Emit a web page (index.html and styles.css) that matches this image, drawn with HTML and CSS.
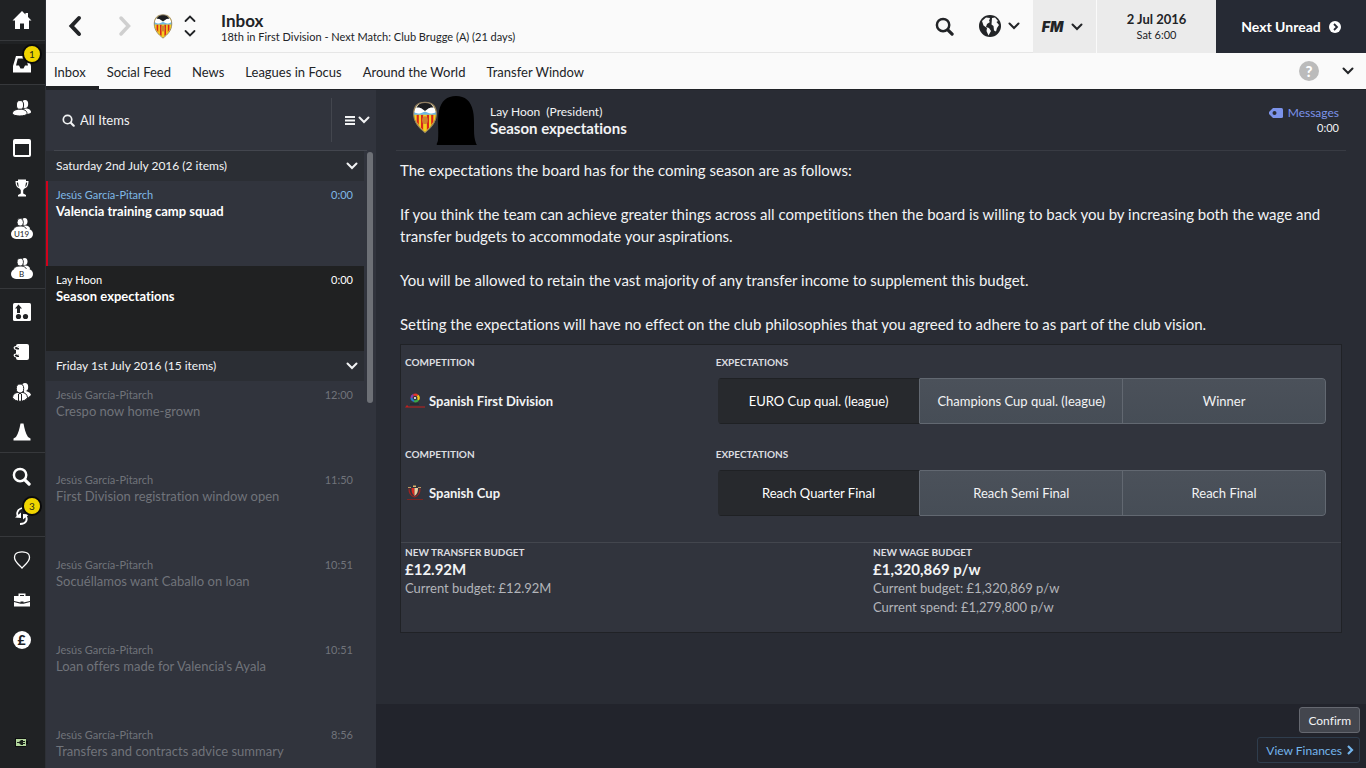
FILE: index.html
```html
<!DOCTYPE html>
<html lang="en">
<head>
    <meta charset="UTF-8">
    <meta name="viewport" content="width=device-width, initial-scale=1.0">
    <title>Inbox - Season expectations</title>
    <link rel="stylesheet" href="styles.css">
</head>
<body>
    <!-- shared icon shapes -->
    <svg class="sprite" aria-hidden="true">
        <symbol id="chevron-down" viewBox="0 0 12 8">
            <path d="M1.500 1.500 6 6l4.500-4.500" fill="none" stroke="currentColor" stroke-width="2" stroke-linecap="round"/>
        </symbol>
        <symbol id="search" viewBox="0 0 20 20">
            <circle cx="8.500" cy="8.500" r="6.500" fill="none" stroke="currentColor" stroke-width="2.600"/>
            <path d="M13.500 13.500 18 18" stroke="currentColor" stroke-width="3.400" stroke-linecap="round"/>
        </symbol>
        <symbol id="people" viewBox="0 0 20 18">
            <ellipse cx="13" cy="5" rx="3.200" ry="4"/>
            <path d="M11 10c4-1.500 8 .5 8 3 0 1.500-3 2-6 2z"/>
            <g stroke="#202224" stroke-width="1">
                <ellipse cx="8" cy="6" rx="3.600" ry="4.500"/>
                <path d="M.5 14.500c0-3 3.500-4.300 7.500-4.300s7 1.300 7 4.300c0 3.300-14.500 3.300-14.500 0z"/>
            </g>
        </symbol>
        <symbol id="crest" viewBox="0 0 24 30">
            <path d="M12 1C5 1 1.500 5 1.500 12c0 8 5.500 13 10.500 17 5-4 10.500-9 10.500-17C22.500 5 19 1 12 1z" fill="#f6cf1e"/>
            <path d="M4.300 12.500h2v9.500l-2-3zM8.300 12.500h2v14l-2-2zM13.700 12.500h2v12l-2 2zM17.700 12.500h2v6.500l-2 3z" fill="#d8261c"/>
            <path d="M1.700 9.500h20.600c.2 1.200.2 2 0 3H1.700c-.2-1-.2-1.800 0-3z" fill="#6fb9e6"/>
            <path d="M2 10C3 4 7 1 12 1s9 3 10 9c-2 1.500-4 1.500-6 1l-4-1.500L8 11c-2 .5-4 .5-6-1z" fill="#fff"/>
            <path d="M4 6C6 2.500 8.500 1 12 1s6 1.500 8 5c-2-.5-4 0-5.500 1.200L12 9 9.500 7.200C8 6 6 5.500 4 6z" fill="#1b1c1f"/>
            <ellipse cx="12" cy="17.500" rx="2.600" ry="3.600" fill="#d1842c"/>
            <path d="M12 1C5 1 1.500 5 1.500 12c0 8 5.500 13 10.500 17 5-4 10.500-9 10.500-17C22.500 5 19 1 12 1z" fill="none" stroke="#8f7d62" stroke-width="1"/>
        </symbol>
    </svg>

    <div class="app">
        <nav class="sidebar" aria-label="Main">
            <div class="nav-group">
                <a href="#" class="nav-item" aria-label="Home">
                    <svg width="20" height="20" viewBox="0 0 20 20"><path d="M10 1 .5 10.500H3V19h5v-5.500h4V19h5v-8.500h2.500L16 7V3h-2.500v1.500z"/></svg>
                </a>
            </div>
            <div class="nav-group current">
                <a href="#" class="nav-item" aria-label="Inbox">
                    <svg width="20" height="20" viewBox="0 0 20 20"><path d="M4 2h12l3 10v6.500H1V12zm1.800 2.500L4 11.500h3l1.500 3h3l1.500-3h3l-1.800-7z" fill-rule="evenodd"/></svg>
                    <span class="badge">1</span>
                </a>
            </div>
            <div class="nav-group">
                <a href="#" class="nav-item" aria-label="Squad">
                    <svg width="20" height="18"><use href="#people"/></svg>
                </a>
                <a href="#" class="nav-item" aria-label="Schedule">
                    <svg width="18" height="18" viewBox="0 0 18 18"><path d="M2 0h14a2 2 0 0 1 2 2v14a2 2 0 0 1-2 2H2a2 2 0 0 1-2-2V2a2 2 0 0 1 2-2zm0 5v11h14V5z" fill-rule="evenodd"/></svg>
                </a>
                <a href="#" class="nav-item" aria-label="Competitions">
                    <svg width="14" height="18" viewBox="0 0 14 18"><path d="M3 .5h8V2h2.500c0 4-1 6.500-4 7.500-.6.800-1.300 1-1.300 2v3l2.800 1.500v1.500H3V16l2.800-1.500v-3c0-1-.7-1.200-1.300-2C1.500 8.500.5 6 .5 2H3zM3 3.500H1.800C2 5.500 2.500 7 3.800 8zM11 3.500 10.200 8c1.300-1 1.800-2.500 2-4.500z" fill-rule="evenodd"/></svg>
                </a>
                <a href="#" class="nav-item team" aria-label="Under 19s">
                    <svg width="18" height="16"><use href="#people"/></svg>
                    <span class="team-tag">U19</span>
                </a>
                <a href="#" class="nav-item team" aria-label="B team">
                    <svg width="18" height="16"><use href="#people"/></svg>
                    <span class="team-tag">B</span>
                </a>
            </div>
            <div class="nav-group">
                <a href="#" class="nav-item" aria-label="Tactics">
                    <svg width="18" height="18" viewBox="0 0 18 18"><rect width="18" height="18" rx="1.500"/><g fill="#202224"><path d="M5.500 1.500 9 5.500H7V10H4V5.500H2z"/><circle cx="5.500" cy="13.500" r="2.600"/><circle cx="12.500" cy="13.500" r="2.600"/></g></svg>
                </a>
                <a href="#" class="nav-item" aria-label="Team report">
                    <svg width="18" height="18" viewBox="0 0 18 18"><rect x="3" y="1" width="13" height="16" rx="2"/><g fill="none" stroke="#202224" stroke-width="3"><path d="M0 5h6M0 12.500h6"/></g><g fill="none" stroke="#fff" stroke-width="1.200"><path d="M3.500 6.500C.5 6.500.5 3.500 3 3.500q2.500 0 2.500 1.500M3.500 14C.5 14 .5 11 3 11q2.500 0 2.500 1.500"/></g></svg>
                </a>
                <a href="#" class="nav-item" aria-label="Staff">
                    <svg width="20" height="20" viewBox="0 0 20 20"><ellipse cx="13" cy="5" rx="3.200" ry="4"/><path d="M12 9c4 0 6.500 2 7 4l-3 2.500-4-2z"/><g stroke="#202224"><ellipse cx="8" cy="6.500" rx="3.700" ry="4.500"/><path d="M.5 15.500C1 12 3 10.800 6 10.300l2 1.700 2-1.700c3 .5 5 1.700 5.500 5.200-2 5-13 5-15 0z"/><path d="M6.500 12v7M9.500 12v7"/></g></svg>
                </a>
                <a href="#" class="nav-item" aria-label="Training">
                    <svg width="18" height="18" viewBox="0 0 18 18"><path d="M7.500.5h3c1 5 2 10 4.500 13.500l2.500 1.500V17.500H.5v-2L3 14C5.500 10.500 6.500 5.500 7.500.5z"/></svg>
                </a>
            </div>
            <div class="nav-group">
                <a href="#" class="nav-item" aria-label="Scouting">
                    <svg width="19" height="19"><use href="#search"/></svg>
                </a>
                <a href="#" class="nav-item" aria-label="Transfers">
                    <svg width="14" height="20" viewBox="0 0 14 20"><g fill="none" stroke="#fff" stroke-width="1.800"><path d="M7 2C2 3.500 1 8 3.500 11"/><path d="M5 18c6.500 0 8.500-5 5-9"/></g><path d="M0 11.500 6 12V6.500zM14 8.500 8 8v5.500z"/></svg>
                    <span class="badge">3</span>
                </a>
            </div>
            <div class="nav-group last">
                <a href="#" class="nav-item" aria-label="Club">
                    <svg width="18" height="18" viewBox="0 0 18 18"><path d="M5 1.500Q9 .2 13 1.500q3.500 1.200 3.500 5C16.500 11 11 14.500 9 17 7 14.500 1.500 11 1.500 6.500q0-3.800 3.500-5z" fill="none" stroke="#fff" stroke-width="1.300"/></svg>
                </a>
                <a href="#" class="nav-item" aria-label="Board">
                    <svg width="16" height="14" viewBox="0 0 16 14"><path d="M4.500 3V.5h7V3H16v5l-6.500 1.500v-1h-3v1L0 8V3zm1.500 0h4V2H6z" fill-rule="evenodd"/><path d="m0 9 6.500 1.700h3L16 9v4.500H0z"/></svg>
                </a>
                <a href="#" class="nav-item" aria-label="Finances">
                    <span class="coin">£</span>
                </a>
            </div>
            <svg class="battery" width="13" height="9" viewBox="0 0 13 9"><path d="M0 0h11v3h2v3h-2v3H0z" fill="#0d0f0e"/><path d="M1 1h10v7H1z" fill="#b3d69d"/><path d="M2 4h2l2-2h2v1h2v1H8v1h2v1H8v1H6L4 5H2z" fill="#1a211a"/></svg>
        </nav>

        <div class="page">
            <header class="topbar">
                <button class="nav-arrow" aria-label="Back">
                    <svg width="14" height="22" viewBox="0 0 14 22"><path d="M11 3 3.500 11l7.500 8" fill="none" stroke="currentColor" stroke-width="4" stroke-linecap="round"/></svg>
                </button>
                <button class="nav-arrow forward" aria-label="Forward">
                    <svg width="14" height="22" viewBox="0 0 14 22"><path d="m3 3 7.500 8L3 19" fill="none" stroke="currentColor" stroke-width="3.500" stroke-linecap="round"/></svg>
                </button>
                <svg class="club" width="20" height="25"><use href="#crest"/></svg>
                <button class="stepper" aria-label="Change section">
                    <svg width="12" height="22" viewBox="0 0 12 22"><path d="M1.500 6 6 1.500 10.500 6M1.500 16 6 20.500 10.500 16" fill="none" stroke="currentColor" stroke-width="1.800" stroke-linecap="round"/></svg>
                </button>
                <div class="heading">
                    <h1>Inbox</h1>
                    <p>18th in First Division - Next Match: Club Brugge (A) (21 days)</p>
                </div>
                <button class="icon-btn" aria-label="Search">
                    <svg width="19" height="19"><use href="#search"/></svg>
                </button>
                <button class="icon-btn world" aria-label="World">
                    <svg width="22" height="22" viewBox="0 0 22 22"><circle cx="11" cy="11" r="11" fill="#222427"/><path d="m3 6 4-3.500 4 .5-1 3 1 1-3 2-1 3 3 1 2 3-2.500 4.500L7.500 16l.5-3-3.500-2.500zM13 3l3-.5 3 3.500-1.500 1 2.500 3-2 3-1 3.500-2-1-.5-4.500-2-1.500z" fill="#fafafa"/></svg>
                    <svg width="12" height="8"><use href="#chevron-down"/></svg>
                </button>
                <button class="fm-btn" aria-label="FM menu">
                    <span class="fm">FM</span>
                    <svg width="12" height="8"><use href="#chevron-down"/></svg>
                </button>
                <div class="date">
                    <strong>2 Jul 2016</strong>
                    <span>Sat 6:00</span>
                </div>
                <button class="next-btn">
                    Next Unread
                    <svg width="12" height="12" viewBox="0 0 12 12"><circle cx="6" cy="6" r="6" fill="#fff"/><path d="m5 3 3 3-3 3" fill="none" stroke="#262a34" stroke-width="1.800"/></svg>
                </button>
            </header>

            <nav class="tabs" aria-label="Inbox sections">
                <a href="#" class="tab active">Inbox</a>
                <a href="#" class="tab">Social Feed</a>
                <a href="#" class="tab">News</a>
                <a href="#" class="tab">Leagues in Focus</a>
                <a href="#" class="tab">Around the World</a>
                <a href="#" class="tab">Transfer Window</a>
                <button class="help" aria-label="Help">?</button>
                <button class="more" aria-label="More"><svg width="12" height="8"><use href="#chevron-down"/></svg></button>
            </nav>

            <div class="content">
                <aside class="inbox">
                    <div class="filter">
                        <label class="filter-search">
                            <svg width="13" height="13"><use href="#search"/></svg>
                            <input type="text" value="All Items" aria-label="Filter items">
                        </label>
                        <button class="filter-menu" aria-label="Filter menu">
                            <svg width="10" height="9" viewBox="0 0 10 9"><path d="M0 0h10v2H0zM0 3.500h10v2H0zM0 7h10v2H0z" fill="currentColor"/></svg>
                            <svg width="12" height="8"><use href="#chevron-down"/></svg>
                        </button>
                    </div>
                    <div class="list-wrap">
                        <div class="list">
                            <button class="day">Saturday 2nd July 2016 (2 items) <svg width="12" height="8"><use href="#chevron-down"/></svg></button>
                            <a href="#" class="item unread">
                                <span class="from">Jesús García-Pitarch</span><time>0:00</time>
                                <span class="subject">Valencia training camp squad</span>
                            </a>
                            <a href="#" class="item selected">
                                <span class="from">Lay Hoon</span><time>0:00</time>
                                <span class="subject">Season expectations</span>
                            </a>
                            <button class="day">Friday 1st July 2016 (15 items) <svg width="12" height="8"><use href="#chevron-down"/></svg></button>
                            <a href="#" class="item">
                                <span class="from">Jesús García-Pitarch</span><time>12:00</time>
                                <span class="subject">Crespo now home-grown</span>
                            </a>
                            <a href="#" class="item">
                                <span class="from">Jesús García-Pitarch</span><time>11:50</time>
                                <span class="subject">First Division registration window open</span>
                            </a>
                            <a href="#" class="item">
                                <span class="from">Jesús García-Pitarch</span><time>10:51</time>
                                <span class="subject">Socuéllamos want Caballo on loan</span>
                            </a>
                            <a href="#" class="item">
                                <span class="from">Jesús García-Pitarch</span><time>10:51</time>
                                <span class="subject">Loan offers made for Valencia's Ayala</span>
                            </a>
                            <a href="#" class="item">
                                <span class="from">Jesús García-Pitarch</span><time>8:56</time>
                                <span class="subject">Transfers and contracts advice summary</span>
                            </a>
                        </div>
                        <div class="scrollbar"><div class="thumb"></div></div>
                    </div>
                </aside>

                <main class="message">
                    <div class="message-head">
                        <svg width="64" height="50" viewBox="0 0 64 50">
                            <use href="#crest" x="-1" y="6" width="26" height="33"/>
                            <path d="M24 50c-1-1 1-3 1-5 1-9-1-21 1-29C28 6 34 1 43 1s15 5 17 15c2 9 0 22 2 29 1 3 1 4 2 5z" fill="#000"/>
                        </svg>
                        <div class="sender">
                            <p>Lay Hoon&nbsp; (President)</p>
                            <h2>Season expectations</h2>
                        </div>
                        <div class="meta">
                            <a href="#"><svg width="14" height="10" viewBox="0 0 14 10"><path d="M4 0h8.500Q14 0 14 1.500v7q0 1.500-1.500 1.500H4L0 6V4z" fill="currentColor"/><circle cx="5.500" cy="5" r="2" fill="#292c34"/></svg>Messages</a>
                            <time>0:00</time>
                        </div>
                    </div>

                    <div class="message-body">
                        <p>The expectations the board has for the coming season are as follows:</p>
                        <p>If you think the team can achieve greater things across all competitions then the board is willing to back you by increasing both the wage and transfer budgets to accommodate your aspirations.</p>
                        <p>You will be allowed to retain the vast majority of any transfer income to supplement this budget.</p>
                        <p>Setting the expectations will have no effect on the club philosophies that you agreed to adhere to as part of the club vision.</p>

                        <section class="board">
                            <div class="competition">
                                <h3>Competition</h3>
                                <h3>Expectations</h3>
                                <div class="comp-name">
                                    <svg width="20" height="16" viewBox="0 0 20 16"><g fill="none" stroke-width="2.200"><path d="M6.500 5a3.500 3.500 0 0 1 2-3" stroke="#8c3fa8"/><path d="M8.500 2a3.500 3.500 0 0 1 4 .5" stroke="#e5352b"/><path d="M12.500 2.500A3.500 3.500 0 0 1 13 7" stroke="#f3c51c"/><path d="M13 7a3.500 3.500 0 0 1-4 1" stroke="#39a845"/><path d="M9 8a3.500 3.500 0 0 1-2.500-3" stroke="#2777c9"/></g><circle cx="10" cy="5" r="1" fill="#fff"/><path d="M5 10.500h9v1H5z" fill="#202226"/><path d="M0 14.500 2 12l1.500 1.500H20v1z" fill="#c3201f"/></svg>
                                    Spanish First Division
                                </div>
                                <div class="choices" role="group" aria-label="Spanish First Division expectations">
                                    <button class="choice chosen" aria-pressed="true">EURO Cup qual. (league)</button>
                                    <button class="choice" aria-pressed="false">Champions Cup qual. (league)</button>
                                    <button class="choice" aria-pressed="false">Winner</button>
                                </div>
                            </div>
                            <div class="competition">
                                <h3>Competition</h3>
                                <h3>Expectations</h3>
                                <div class="comp-name">
                                    <svg width="20" height="16" viewBox="0 0 20 16"><path d="M4 3.500C4 8 6 11 9.500 12 13 11 15 8 15 3.500" fill="none" stroke="#a32420" stroke-width="1.200"/><path d="M3 2.500h3M13 2.500h3" stroke="#b99a62"/><path d="M6.500 3h3v8C7 9 6.500 7 6.500 3z" fill="#d9291f"/><path d="M9.500 3h3.500c0 4-.8 6-3.500 8z" fill="#e8d2a4"/><path d="M8 .5h3v1.500H8z" fill="#d9b36b"/><path d="M2 14.500h16" stroke="#7d2422"/></svg>
                                    Spanish Cup
                                </div>
                                <div class="choices" role="group" aria-label="Spanish Cup expectations">
                                    <button class="choice chosen" aria-pressed="true">Reach Quarter Final</button>
                                    <button class="choice" aria-pressed="false">Reach Semi Final</button>
                                    <button class="choice" aria-pressed="false">Reach Final</button>
                                </div>
                            </div>
                            <div class="budgets">
                                <div>
                                    <h3>New transfer budget</h3>
                                    <strong>£12.92M</strong>
                                    <p>Current budget: £12.92M</p>
                                </div>
                                <div>
                                    <h3>New wage budget</h3>
                                    <strong>£1,320,869 p/w</strong>
                                    <p>Current budget: £1,320,869 p/w</p>
                                    <p>Current spend: £1,279,800 p/w</p>
                                </div>
                            </div>
                        </section>
                    </div>

                    <footer class="actions">
                        <button class="confirm">Confirm</button>
                        <a href="#" class="finances">View Finances <svg width="8" height="10" viewBox="0 0 8 10"><path d="m2 1 4 4-4 4" fill="none" stroke="currentColor" stroke-width="2.200"/></svg></a>
                    </footer>
                </main>
            </div>
        </div>
    </div>
</body>
</html>
```
FILE: styles.css
```css
* {
    box-sizing: border-box;
}

body {
    margin: 0;
    font-family: Lato, "Liberation Sans", sans-serif;
    font-size: 13px;
    font-variant-ligatures: none;
    color: #f2f3f4;
    background: #292c34;
}

h1, h2, h3, p {
    margin: 0;
}

a {
    color: inherit;
    text-decoration: none;
}

button {
    font: inherit;
    color: inherit;
    background: none;
    border: 0;
    padding: 0;
    margin: 0;
    cursor: pointer;
}

svg {
    display: block;
    flex-shrink: 0;
}

.sprite {
    position: absolute;
    width: 0;
    height: 0;
}

.app {
    display: flex;
    height: 100vh;
    overflow: hidden;
}

/* left icon rail */
.sidebar {
    width: 46px;
    flex-shrink: 0;
    display: flex;
    flex-direction: column;
    background: #202224;
    border-right: 1px solid #2d3036;
}

.nav-group {
    border-bottom: 1px solid #36383b;
    margin-bottom: 3px;
}

.nav-group.current {
    background: #1a1b1c;
}

.nav-group.last {
    border-bottom: 0;
}

.nav-item {
    position: relative;
    display: flex;
    flex-direction: column;
    align-items: center;
    justify-content: center;
    height: 40px;
    padding-right: 2px;
    color: #fff;
    fill: #fff;
}

.badge {
    position: absolute;
    top: 0;
    right: 3px;
    width: 20px;
    height: 20px;
    border: 2px solid #0b0b0c;
    border-radius: 50%;
    background: #f0d500;
    color: #26271f;
    font-size: 10px;
    line-height: 16px;
    text-align: center;
}

.team svg {
    margin-bottom: -4px;
}

.team-tag {
    position: relative;
    width: 22px;
    height: 10px;
    border-radius: 5px;
    background: #fff;
    color: #202224;
    font-size: 8px;
    line-height: 10px;
    text-align: center;
}

.coin {
    width: 18px;
    height: 18px;
    border-radius: 50%;
    background: #fff;
    color: #202224;
    font-size: 14px;
    font-weight: 900;
    line-height: 18px;
    text-align: center;
}

.battery {
    margin: auto 0 21px 15px;
}

.page {
    flex: 1;
    min-width: 0;
    display: flex;
    flex-direction: column;
}

/* top bar */
.topbar {
    display: flex;
    align-items: center;
    height: 53px;
    flex-shrink: 0;
    background: #fafafa;
    border-bottom: 1px solid #e6e6e6;
    color: #222427;
}

.nav-arrow {
    margin-left: 22px;
}

.nav-arrow.forward {
    margin-left: 36px;
    color: #cfcfcf;
}

.club {
    margin-left: 21px;
}

.stepper {
    margin-left: 11px;
}

.heading {
    flex: 1;
    min-width: 0;
    margin-left: 25px;
    padding-top: 4px;
}

.heading h1 {
    font-size: 17px;
    line-height: 18px;
    font-weight: 700;
}

.heading p {
    font-size: 11px;
    line-height: 14px;
}

.icon-btn {
    display: flex;
    align-items: center;
    gap: 7px;
    margin-right: 25px;
}

.icon-btn.world {
    margin-right: 13px;
}

.fm-btn {
    display: flex;
    align-items: center;
    justify-content: center;
    gap: 8px;
    align-self: stretch;
    width: 64px;
    margin-bottom: -1px;
    padding-right: 4px;
    background: #ebebeb;
    border-right: 1px solid #fafafa;
}

.fm {
    font-family: Inter, "Liberation Sans", sans-serif;
    font-size: 14px;
    font-weight: 900;
    font-style: italic;
}

.date {
    display: flex;
    flex-direction: column;
    align-items: center;
    justify-content: center;
    align-self: stretch;
    width: 119px;
    margin-bottom: -1px;
    background: #ebebeb;
}

.date strong {
    font-size: 13px;
    line-height: 17px;
}

.date span {
    font-size: 11px;
    line-height: 14px;
}

.next-btn {
    display: flex;
    align-items: center;
    justify-content: center;
    gap: 8px;
    align-self: stretch;
    width: 150px;
    margin-bottom: -1px;
    background: #262a34;
    color: #fff;
    font-size: 14px;
    font-weight: 700;
}

/* section tabs */
.tabs {
    display: flex;
    align-items: center;
    height: 36px;
    flex-shrink: 0;
    background: #fafafa;
    color: #222427;
}

.tab {
    height: 36px;
    padding: 0 13px 0 8px;
    line-height: 38px;
}

.tab.active {
    border-bottom: 3px solid #202224;
}

.help {
    width: 20px;
    height: 20px;
    margin-left: auto;
    border-radius: 50%;
    background: #bbb;
    color: #fff;
    font-size: 15px;
    font-weight: 900;
    line-height: 20px;
}

.more {
    margin: 0 12px 0 23px;
}

.content {
    flex: 1;
    min-height: 0;
    display: flex;
    border-top: 1px solid #202226;
}

/* inbox list */
.inbox {
    width: 330px;
    flex-shrink: 0;
    display: flex;
    flex-direction: column;
    background: #31343d;
}

.filter {
    display: flex;
    align-items: center;
    height: 61px;
    flex-shrink: 0;
    margin: 0 9px 0 8px;
    border-bottom: 1px solid #43464e;
}

.filter-search {
    flex: 1;
    display: flex;
    align-items: center;
    gap: 5px;
    padding-left: 8px;
}

.filter-search input {
    flex: 1;
    min-width: 0;
    padding: 0;
    border: 0;
    outline: 0;
    background: none;
    color: inherit;
    font: inherit;
}

.filter-menu {
    display: flex;
    align-items: center;
    gap: 3px;
    height: 44px;
    margin-right: -3px;
    padding-left: 13px;
    border-left: 1px solid #43464e;
}

.list-wrap {
    flex: 1;
    min-height: 0;
    display: flex;
}

.list {
    flex: 1;
    overflow: hidden;
}

.day {
    display: flex;
    align-items: center;
    justify-content: space-between;
    width: 100%;
    height: 30px;
    padding: 0 6px 1px 10px;
    background: #2b2e34;
    font-size: 12px;
}

.item {
    display: grid;
    grid-template-columns: 1fr auto;
    align-content: start;
    height: 85px;
    padding: 5px 11px 0 8px;
    border-left: 2px solid transparent;
    color: #70737a;
}

.from,
.item time {
    font-size: 11px;
    line-height: 17px;
}

.subject {
    grid-column: 1 / -1;
    font-size: 13px;
    line-height: 17px;
}

.unread,
.selected {
    color: #fff;
}

.unread .subject,
.selected .subject {
    font-weight: 700;
}

.unread {
    border-left-color: #d0021b;
}

.unread .from,
.unread time {
    color: #7fb8e6;
}

.selected {
    background: #202122;
    border-left-color: #202122;
}

.scrollbar {
    width: 12px;
    padding: 1px 3px;
}

.thumb {
    height: 251px;
    border-radius: 3px;
    background: #6d7076;
}

/* opened message */
.message {
    flex: 1;
    min-width: 0;
    display: flex;
    flex-direction: column;
    background: #292c34;
}

.message-head {
    display: flex;
    align-items: center;
    height: 61px;
    flex-shrink: 0;
    margin: 0 20px;
    padding: 0 7px 0 17px;
    border-bottom: 1px solid #383b43;
}

.sender {
    flex: 1;
    margin-left: 13px;
}

.sender p {
    font-size: 12px;
    line-height: 16px;
}

.sender h2 {
    font-size: 15px;
    line-height: 16px;
}

.meta {
    text-align: right;
    line-height: 15px;
}

.meta a {
    display: flex;
    align-items: center;
    gap: 5px;
    color: #7c93ea;
    font-size: 12px;
}

.meta time {
    font-size: 11px;
}

.message-body {
    flex: 1;
    min-height: 0;
    padding: 8px 24px 0;
    overflow: hidden;
}

.message-body > p {
    font-size: 15px;
    line-height: 22px;
    margin-bottom: 22px;
}

.message-body > p:last-of-type {
    margin-bottom: 9px;
}

.board {
    padding-bottom: 15px;
    background: #31343d;
    border: 1px solid #202226;
}

.board h3 {
    color: #dcdde0;
    font-size: 10px;
    line-height: 16px;
    font-weight: 700;
    text-transform: uppercase;
}

.competition {
    display: grid;
    grid-template-columns: 1fr 2fr;
    row-gap: 8px;
    padding: 8px 4px 14px;
}

.competition:first-child {
    padding-top: 9px;
}

.comp-name {
    display: flex;
    align-items: center;
    gap: 4px;
    font-weight: 700;
}

.choices {
    display: grid;
    grid-template-columns: repeat(3, 1fr);
    height: 46px;
    margin: 0 11px 0 2px;
    border-radius: 4px;
    overflow: hidden;
}

.choice {
    background: linear-gradient(#4b515a, #464d56);
    border: 1px solid #626871;
    border-left-width: 0;
}

.choice:last-child {
    border-radius: 0 4px 4px 0;
}

.choice.chosen {
    background: #27292d;
    border-color: #1f2124 #626871 #1f2124 #1f2124;
    color: #fff;
}

.budgets {
    display: grid;
    grid-template-columns: 1fr 1fr;
    column-gap: 4px;
    margin-top: 12px;
    padding: 1px 4px 0;
    border-top: 1px solid #43464e;
    line-height: 19px;
}

.budgets strong {
    display: block;
    font-size: 15px;
}

.budgets p {
    color: #b3b5ba;
}

.actions {
    display: flex;
    flex-direction: column;
    align-items: flex-end;
    gap: 4px;
    height: 64px;
    flex-shrink: 0;
    padding: 3px 6px 0;
    background: #22242c;
}

.confirm,
.finances {
    height: 26px;
    padding: 0 8px;
    border: 1px solid #656870;
    border-radius: 3px;
    font-size: 12px;
}

.confirm {
    background: #43464e;
}

.finances {
    display: flex;
    align-items: center;
    gap: 4px;
    border-color: #2f3d4d;
    padding: 0 5px 0 8px;
    color: #74b5ec;
}
```
